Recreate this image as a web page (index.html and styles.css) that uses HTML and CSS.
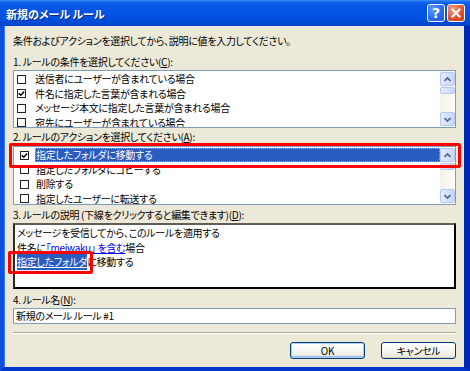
FILE: index.html
```html
<!DOCTYPE html>
<html lang="ja">
<head>
<meta charset="utf-8">
<title>新規のメール ルール</title>
<link rel="stylesheet" href="styles.css">
</head>
<body>
<div class="window">
  <div class="titlebar">
    <span class="title">新規のメール ルール</span>
    <div class="tbtns">
      <span class="tbtn help">?</span>
      <span class="tbtn close"><svg width="10" height="10" viewBox="0 0 10 10"><path d="M1.5 1.5 L8.5 8.5 M8.5 1.5 L1.5 8.5" stroke="#fff" stroke-width="2" stroke-linecap="square"/></svg></span>
    </div>
  </div>
  <div class="client">
    <p class="intro">条件およびアクションを選択してから、説明に値を入力してください。</p>

    <div class="label l1">1. ルールの条件を選択してください(<u>C</u>):</div>
    <div class="listbox lb1">
      <ul class="rows">
        <li class="row"><span class="cb"></span><span class="txt">送信者にユーザーが含まれている場合</span></li>
        <li class="row"><span class="cb"><svg width="7" height="7" viewBox="0 0 7 7"><path d="M0.8 3.2 L2.8 5.2 L6.2 1.6" fill="none" stroke="#000" stroke-width="1.5"/></svg></span><span class="txt">件名に指定した言葉が含まれる場合</span></li>
        <li class="row"><span class="cb"></span><span class="txt">メッセージ本文に指定した言葉が含まれる場合</span></li>
        <li class="row"><span class="cb"></span><span class="txt">宛先にユーザーが含まれている場合</span></li>
      </ul>
      <div class="vscroll">
        <span class="sbtn"><svg width="7" height="5" viewBox="0 0 7 5"><path d="M0.5 4 L3.5 1 L6.5 4" fill="none" stroke="#4d6185" stroke-width="1.6"/></svg></span>
        <span class="thumb"></span>
        <span class="track"></span>
        <span class="sbtn"><svg width="7" height="5" viewBox="0 0 7 5"><path d="M0.5 1 L3.5 4 L6.5 1" fill="none" stroke="#4d6185" stroke-width="1.6"/></svg></span>
      </div>
    </div>

    <div class="label l2">2. ルールのアクションを選択してください(<u>A</u>):</div>
    <div class="listbox lb2">
      <ul class="rows">
        <li class="row sel"><span class="cb"><svg width="7" height="7" viewBox="0 0 7 7"><path d="M0.8 3.2 L2.8 5.2 L6.2 1.6" fill="none" stroke="#000" stroke-width="1.5"/></svg></span><span class="txt">指定したフォルダに移動する</span></li>
        <li class="row"><span class="cb"></span><span class="txt">指定したフォルダにコピーする</span></li>
        <li class="row"><span class="cb"></span><span class="txt">削除する</span></li>
        <li class="row"><span class="cb"></span><span class="txt">指定したユーザーに転送する</span></li>
      </ul>
      <div class="vscroll">
        <span class="sbtn"><svg width="7" height="5" viewBox="0 0 7 5"><path d="M0.5 4 L3.5 1 L6.5 4" fill="none" stroke="#4d6185" stroke-width="1.6"/></svg></span>
        <span class="thumb"></span>
        <span class="track"></span>
        <span class="sbtn"><svg width="7" height="5" viewBox="0 0 7 5"><path d="M0.5 1 L3.5 4 L6.5 1" fill="none" stroke="#4d6185" stroke-width="1.6"/></svg></span>
      </div>
    </div>

    <div class="label l3">3. ルールの説明 (下線をクリックすると編集できます)(<u>D</u>):</div>
    <div class="desc">
      <div class="dline">メッセージを受信してから、このルールを適用する</div>
      <div class="dline">件名に<a class="link">「meiwaku」 を含む</a>場合</div>
      <div class="dline"><a class="link hl">指定したフォルダ</a>に移動する</div>
    </div>

    <div class="label l4">4. ルール名(<u>N</u>):</div>
    <div class="input">新規のメール ルール #1</div>

    <div class="sep"></div>

    <div class="buttons">
      <span class="btn default">OK</span>
      <span class="btn">キャンセル</span>
    </div>
  </div>

  <div class="mark mark1"></div>
  <div class="mark mark2"></div>
</div>
</body>
</html>
```

FILE: styles.css
```css
* { box-sizing: border-box; margin: 0; padding: 0; }
html, body { width: 470px; height: 371px; overflow: hidden; }
body {
  font-family: "Noto Sans CJK JP", "Noto Sans", sans-serif;
  font-size: 10px;
  letter-spacing: -0.3px;
  color: #000;
  font-feature-settings: "palt";
  background: #ECE9D8;
}
ul { list-style: none; }
u { text-decoration: underline; text-underline-offset: 1px; }

.window {
  position: relative;
  width: 470px;
  height: 371px;
  display: flex;
  flex-direction: column;
}

/* title bar */
.titlebar {
  flex: none;
  height: 26px;
  display: flex;
  align-items: center;
  justify-content: space-between;
  padding: 0 5px 0 6px;
  background: linear-gradient(#3d8ef7 0, #1466ef 2px, #0857e6 6px, #0453e3 14px, #0050dc 20px, #0147cf 24px, #0040c4 26px);
}
.title {
  color: #fff;
  font-weight: bold;
  font-size: 11px;
  letter-spacing: 0;
  margin-top: 1px;
  text-shadow: 1px 1px 0 #0b2a8a;
}
.tbtns { display: flex; gap: 2px; }
.tbtn {
  width: 18px;
  height: 18px;
  border: 1px solid #fff;
  border-radius: 3px;
  display: flex;
  align-items: center;
  justify-content: center;
}
.help {
  background: radial-gradient(circle at 30% 25%, #5d98fb 0, #2b6cf0 55%, #1c54d6 100%);
  color: #fff;
  font-family: "DejaVu Sans", sans-serif;
  font-weight: bold;
  font-size: 14px;
  letter-spacing: 0;
  line-height: 1;
}
.close {
  background: radial-gradient(circle at 30% 25%, #f19b80 0, #e2562f 55%, #c53a18 100%);
}

/* client area */
.client {
  flex: 1;
  display: flex;
  flex-direction: column;
  background: #ECE9D8;
  border-left: 4px solid #0a4fe0;
  border-right: 6px solid #0028b8;
  border-bottom: 4px solid #0036cc;
  box-shadow: inset 1px 0 0 #3d7bf0;
  padding: 8px 8px 0 9px;
}
.intro { line-height: 14px; }
.label { line-height: 14px; }
.l1 { margin-top: 7px; }
.l2 { margin-top: 2px; }
.l3 { margin-top: 3px; }
.l4 { margin-top: 4px; }

/* list boxes */
.listbox {
  display: flex;
  background: #fff;
  border: 1px solid #7f9db9;
}
.lb1 { margin-top: 1px; height: 58px; }
.lb2 { margin-top: 2px; height: 59px; }
.rows { flex: 1; overflow: hidden; padding-top: 1px; }
.row {
  height: 14.5px;
  display: flex;
  align-items: center;
  white-space: nowrap;
}
.lb1 .row { padding-left: 3px; }
.lb2 .row { padding-left: 6px; }
.cb {
  flex: none;
  width: 9px;
  height: 9px;
  border: 1px solid #222;
  background: #fff;
  display: flex;
  align-items: center;
  justify-content: center;
  margin-right: 8px;
}
.lb2 .cb { margin-right: 6px; }
.txt { line-height: 14px; padding: 0 2px 0 1px; }
.sel .txt {
  flex: 1;
  background: #2a5bc0;
  color: #fff;
  outline: 1px dotted #d9a35a;
  outline-offset: -1px;
}

.vscroll {
  flex: none;
  width: 15px;
  display: flex;
  flex-direction: column;
  padding: 1px 0 1px 0;
  background: linear-gradient(to right, #f2f1ea, #fdfdfa);
}
.sbtn, .thumb {
  flex: none;
  border: 1px solid #b7c9f3;
  border-radius: 2px;
  background: linear-gradient(to right, #e3ebfe, #c7d7fb);
  display: flex;
  align-items: center;
  justify-content: center;
}
.sbtn { height: 14px; }
.thumb { height: 7px; margin-top: 1px; }
.track { flex: 1; }

/* description */
.desc {
  margin-top: 1px;
  height: 66px;
  background: #fff;
  border: 2px solid #000;
  border-top-color: #5f5d54;
  border-left-color: #2a2a26;
  padding: 1px 2px;
}
.dline { line-height: 14.5px; white-space: nowrap; }
.link {
  color: #0000ff;
  text-decoration: underline;
  text-underline-offset: 1px;
}
.hl {
  background: #2a5bc0;
  color: #fff;
  padding: 1px 0;
}

/* input */
.input {
  margin-top: 1px;
  height: 16px;
  background: #fff;
  border: 1px solid #7f9db9;
  padding-left: 2px;
  line-height: 14px;
}

.sep {
  margin-top: 8px;
  height: 2px;
  border-top: 1px solid #aca899;
  border-bottom: 1px solid #fff;
}

.buttons {
  margin-top: 8px;
  display: flex;
  justify-content: flex-end;
  gap: 16px;
}
.btn {
  width: 75px;
  height: 17px;
  border: 1px solid #003c74;
  border-radius: 3px;
  background: linear-gradient(#ffffff 0, #f6f6f2 50%, #e6e4da 100%);
  box-shadow: inset 0 -1px 0 #d6d0c5;
  display: flex;
  align-items: center;
  justify-content: center;
  line-height: 14px;
}
.default { box-shadow: inset 0 0 0 1px #b5cdf5, inset 0 -2px 0 #9bb9ee; }

/* red annotation frames */
.mark {
  position: absolute;
  border: 3px solid #ff0000;
  border-radius: 2px;
}
.mark1 { left: 9px; top: 143px; width: 452px; height: 25px; }
.mark2 { left: 8px; top: 251px; width: 85px; height: 23px; }
```
